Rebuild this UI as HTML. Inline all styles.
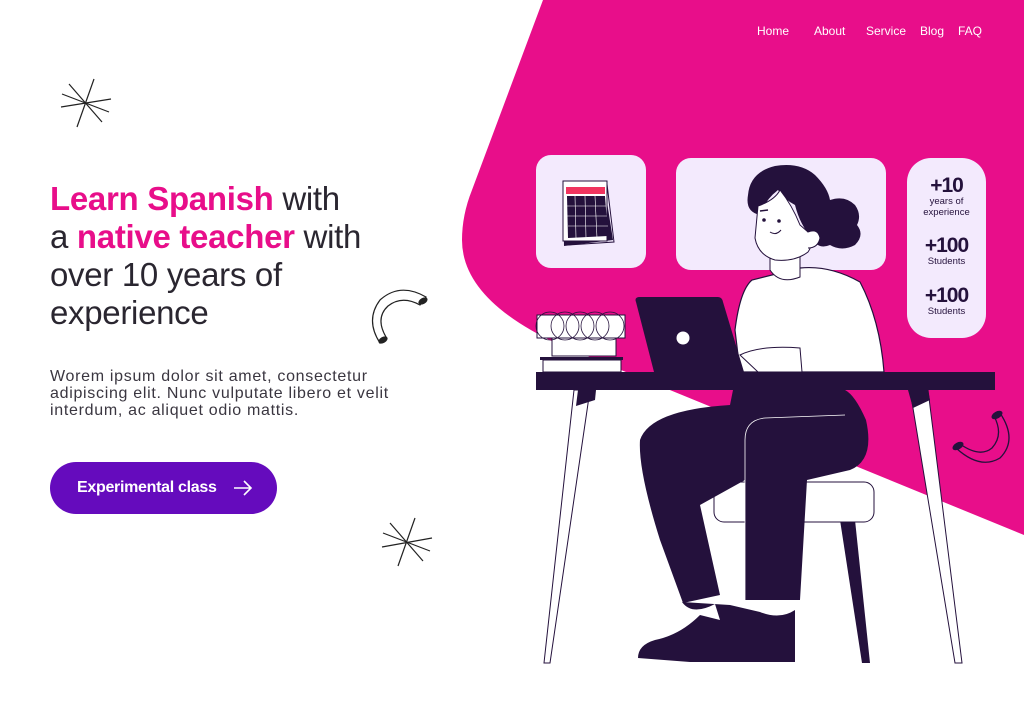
<!DOCTYPE html>
<html><head><meta charset="utf-8"><style>
*{margin:0;padding:0;box-sizing:border-box}
body{width:1024px;height:720px;overflow:hidden;background:#fff;font-family:"Liberation Sans",sans-serif;position:relative}
svg.bg{position:absolute;left:0;top:0}
.nav{position:absolute;top:24px;color:#fff;font-size:12px}
h1{position:absolute;left:50px;top:180px;font-size:33px;line-height:38px;font-weight:normal;color:#2a2630;letter-spacing:-0.3px;white-space:nowrap}
h1 b{color:#e80e8a}
p.body{position:absolute;left:50px;top:368px;font-size:16px;line-height:17px;color:#3a3640;white-space:nowrap;letter-spacing:0.7px}
.btn{position:absolute;left:50px;top:462px;width:227px;height:52px;border-radius:26px;background:#650bbd;color:#fff;font-weight:bold;font-size:16px;line-height:52px;padding-left:27px;letter-spacing:-0.3px}
.btn svg{position:absolute;left:183px;top:18px}
.stat{position:absolute;left:907px;width:79px;text-align:center;color:#24113c}
.stat .n{font-weight:bold;font-size:21px;line-height:21px;letter-spacing:-1px}
.stat .t{font-size:9.5px;line-height:11px}
</style></head><body>
<svg class="bg" width="1024" height="720" viewBox="0 0 1024 720">
<path d="M543 0 L1024 0 L1024 535 L560 345 Q462 300 462 240 Q462 215 472 190 Z" fill="#e80e8a"/>
<g stroke="#222" stroke-width="1.2"><line x1="69" y1="84" x2="102" y2="122"/><line x1="94" y1="79" x2="77" y2="127"/><line x1="61" y1="107" x2="111" y2="99"/><line x1="62" y1="94" x2="109" y2="112"/></g>
<g stroke="#222" stroke-width="1.2"><line x1="390" y1="523" x2="423" y2="561"/><line x1="415" y1="518" x2="398" y2="566"/><line x1="382" y1="547" x2="432" y2="538"/><line x1="383" y1="533" x2="430" y2="551"/></g>
<path d="M426 297 Q400 282 380 300 Q365 320 380 343 L386 337 Q375 318 388 306 Q402 295 420 305 Z" fill="#fff" stroke="#222" stroke-width="1.2"/>
<ellipse cx="423" cy="301" rx="5" ry="3" transform="rotate(-30 423 301)" fill="#222"/><ellipse cx="383" cy="340" rx="5" ry="3" transform="rotate(-30 383 340)" fill="#222"/>
<path d="M1000 413 Q1018 440 1000 458 Q980 470 956 448 L960 444 Q980 458 992 448 Q1004 435 994 416 Z" fill="none" stroke="#24113c" stroke-width="1.3"/>
<ellipse cx="997" cy="415" rx="6" ry="3.5" transform="rotate(-30 997 415)" fill="#24113c"/><ellipse cx="958" cy="446" rx="6" ry="3.5" transform="rotate(-30 958 446)" fill="#24113c"/>
<rect x="536" y="155" width="110" height="113" rx="15" fill="#f3eafd"/>
<rect x="676" y="158" width="210" height="112" rx="15" fill="#f3eafd"/>
<rect x="907" y="158" width="79" height="180" rx="24" fill="#f3eafd"/>
<path d="M563 183 L604 183 L613 240 L564 246 Z" fill="#24113c"/>
<rect x="563" y="181" width="44" height="60" fill="#fff" stroke="#24113c"/>
<rect x="566" y="187" width="39" height="7" fill="#f0345f"/>
<path d="M567 196 L605 196 L608 236 L568 238 Z" fill="#24113c"/>
<g stroke="#fff" stroke-width=".6"><line x1="567" y1="206" x2="606" y2="206"/><line x1="567" y1="216" x2="607" y2="216"/><line x1="568" y1="226" x2="608" y2="226"/><line x1="575" y1="196" x2="576" y2="238"/><line x1="585" y1="196" x2="586" y2="238"/><line x1="595" y1="196" x2="597" y2="238"/></g>
<path d="M607 184 L614 242 L568 245" fill="none" stroke="#24113c"/>
<path d="M574 390 L590 390 L550 663 L544 663 Z" fill="#fff" stroke="#24113c"/>
<path d="M578 390 L596 390 L595 400 L576 406 Z" fill="#24113c"/>
<path d="M910 390 L928 390 L962 663 L955 663 Z" fill="#fff" stroke="#24113c"/>
<path d="M908 390 L928 390 L930 400 L913 408 Z" fill="#24113c"/>
<path d="M840 520 L855 520 L870 663 L862 663 Z" fill="#24113c"/>
<rect x="714" y="482" width="160" height="40" rx="10" fill="#fff" stroke="#24113c"/>
<path d="M752 280 Q740 290 735 330 L740 372 L884 372 Q880 320 860 282 Q830 265 800 268 Z" fill="#fff" stroke="#24113c" stroke-width="1.2"/>
<path d="M770 250 L770 270 Q780 285 800 277 L800 250 Z" fill="#fff" stroke="#24113c"/>
<path d="M748 195 Q750 172 775 166 Q800 162 815 175 Q828 188 830 200 Q845 195 855 205 Q862 215 857 225 Q865 235 855 245 Q842 252 830 245 Q818 250 812 238 Q800 225 795 205 Q785 200 778 190 Q765 200 760 215 Q745 212 748 195 Z" fill="#24113c"/>
<path d="M758 206 Q775 200 780 190 Q792 205 800 225 L808 232 Q815 242 808 252 Q795 262 775 260 Q758 255 755 238 Z" fill="#fff" stroke="#24113c"/>
<path d="M808 232 Q818 228 820 238 Q818 248 808 248" fill="#fff" stroke="#24113c"/>
<path d="M760 211 L768 210" stroke="#24113c" stroke-width="1.5"/>
<circle cx="764" cy="220" r="1.8" fill="#24113c"/><circle cx="779" cy="221" r="1.8" fill="#24113c"/>
<path d="M770 232 Q776 236 781 230" fill="none" stroke="#24113c"/>
<path d="M733 390 L730 405 Q650 410 640 440 Q638 470 660 540 L683 603 L720 595 L700 505 L745 480 L745 600 L800 600 L807 480 L850 470 Q875 460 866 420 Q855 395 845 390 Z" fill="#24113c"/>
<path d="M745 600 L745 440 Q745 420 765 418 L845 415" fill="none" stroke="#fff" stroke-width=".8"/>
<path d="M682 602 Q692 616 715 604 L720 620 L700 615 Q680 635 655 640 Q638 645 638 658 L690 662 L795 662 L795 610 Q780 620 760 612 L730 605 Z" fill="#24113c"/>
<rect x="536" y="372" width="459" height="18" fill="#24113c"/>
<path d="M636 302 Q634 297 640 297 L718 297 Q722 297 723 302 L744 372 L654 372 Z" fill="#24113c"/>
<circle cx="683" cy="338" r="6.5" fill="#fff"/>
<path d="M740 355 Q760 345 800 348 L802 372 L758 372 Z" fill="#fff" stroke="#24113c"/>
<rect x="543" y="360" width="78" height="12" fill="#fff" stroke="#24113c"/>
<rect x="540" y="357" width="83" height="3" fill="#24113c"/>
<rect x="552" y="338" width="64" height="18" fill="#fff" stroke="#24113c"/>
<rect x="537" y="315" width="88" height="23" fill="#fff" stroke="#24113c"/>
<g fill="none" stroke="#24113c" stroke-width=".8"><circle cx="550" cy="326" r="14"/><circle cx="565" cy="326" r="14"/><circle cx="580" cy="326" r="14"/><circle cx="595" cy="326" r="14"/><circle cx="610" cy="326" r="14"/></g>
</svg>
<div class="nav" style="left:757px">Home</div>
<div class="nav" style="left:814px">About</div>
<div class="nav" style="left:866px">Service</div>
<div class="nav" style="left:920px">Blog</div>
<div class="nav" style="left:958px">FAQ</div>
<div class="stat" style="top:175px"><div class="n">+10</div><div class="t">years of<br>experience</div></div>
<div class="stat" style="top:235px"><div class="n">+100</div><div class="t">Students</div></div>
<div class="stat" style="top:285px"><div class="n">+100</div><div class="t">Students</div></div>
<h1><b>Learn Spanish</b> with<br>a <b>native teacher</b> with<br>over 10 years of<br>experience</h1>
<p class="body">Worem ipsum dolor sit amet, consectetur<br>adipiscing elit. Nunc vulputate libero et velit<br>interdum, ac aliquet odio mattis.</p>
<div class="btn">Experimental class<svg width="20" height="16" viewBox="0 0 20 16"><path d="M1 8 L18 8 M11 1 L18 8 L11 15" fill="none" stroke="#fff" stroke-width="1.6"/></svg></div>
</body></html>
